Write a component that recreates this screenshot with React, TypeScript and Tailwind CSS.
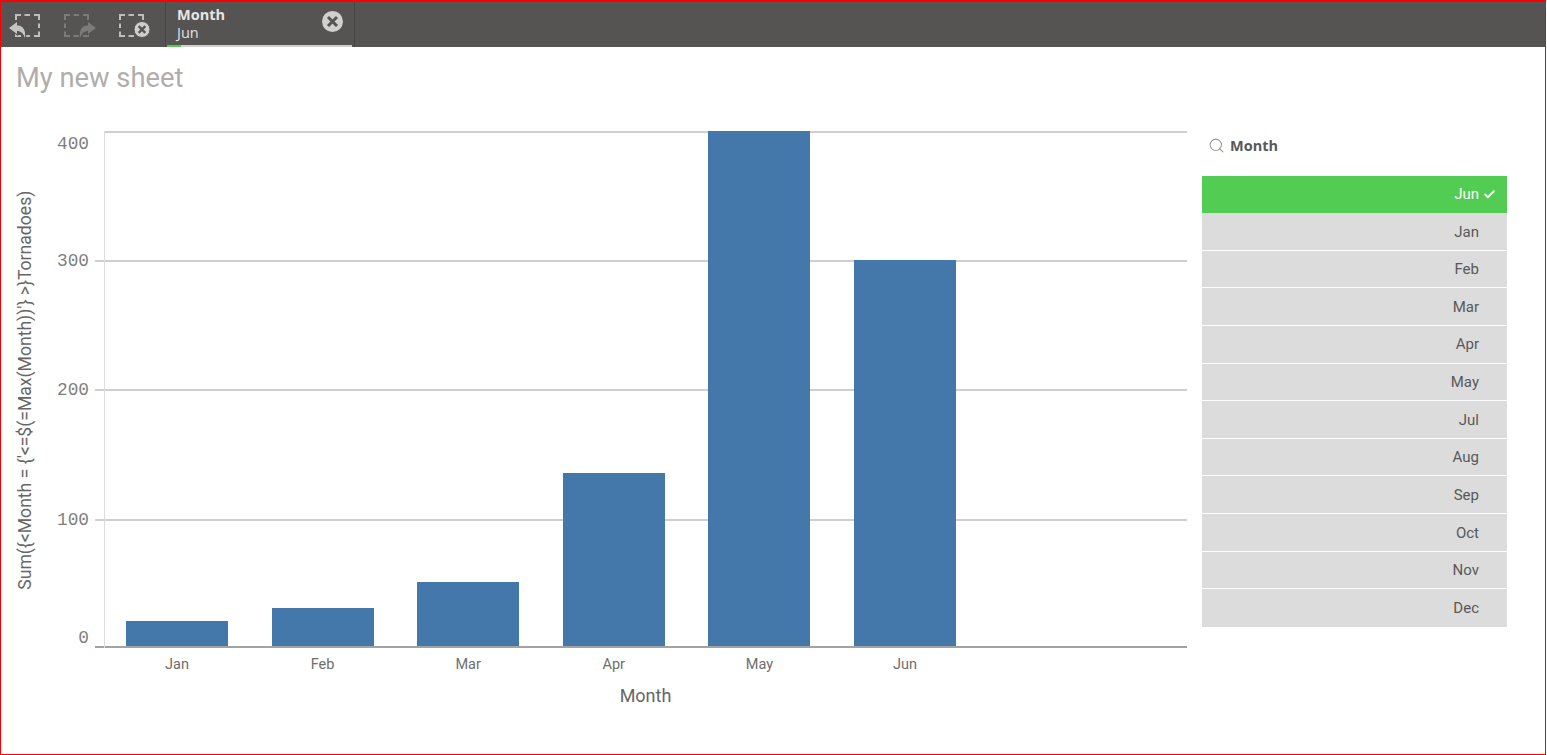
import { Check, Search } from 'lucide-react';

const months = ['Jan', 'Feb', 'Mar', 'Apr', 'May', 'Jul', 'Aug', 'Sep', 'Oct', 'Nov', 'Dec'];

const bars = [
  { month: 'Jan', value: 25 },
  { month: 'Feb', value: 38 },
  { month: 'Mar', value: 64 },
  { month: 'Apr', value: 173 },
  { month: 'May', value: 515 },
  { month: 'Jun', value: 386 },
];

const ticks = [
  { label: '400', rowClass: 'h-[129px]', labelClass: 'top-[3px]', lineClass: 'ml-[9px] bg-[#cfcfcf]' },
  { label: '300', rowClass: 'h-[129px]', labelClass: 'top-[-9px]', lineClass: 'bg-[#cfcfcf]' },
  { label: '200', rowClass: 'h-[130px]', labelClass: 'top-[-9px]', lineClass: 'bg-[#cfcfcf]' },
  { label: '100', rowClass: 'h-[127px]', labelClass: 'top-[-9px]', lineClass: 'bg-[#cfcfcf]' },
  { label: '0', rowClass: 'h-[2px]', labelClass: 'top-[-18px]', lineClass: 'bg-[#a3a3a3]' },
];

function DashedBox({ color }: { color: string }) {
  return (
    <path
      d="M1 6V1H6 M9.5 1H15 M19 1H24V6 M24 9.5V14 M24 17.5V22H19 M15 22H9.5 M6 22H1V17.5 M1 14V9.5"
      fill="none"
      stroke={color}
      strokeWidth="2"
    />
  );
}

function BackIcon() {
  return (
    <svg width="34" height="26" viewBox="-7 0 34 26">
      <DashedBox color="#bdbdbd" />
      <path d="M-6 14 L2 8 V11.5 C8 11 11 16 10 24 C8 19 6 17 2 17 V20 Z" fill="#c4c4c4" stroke="#565452" strokeWidth="2" paintOrder="stroke" />
    </svg>
  );
}

function ForwardIcon() {
  return (
    <svg width="34" height="26" viewBox="0 0 34 26">
      <DashedBox color="#7d7b79" />
      <path d="M32 14 L24 8 V11.5 C18 11 15 16 16 24 C18 19 20 17 24 17 V20 Z" fill="#7d7b79" stroke="#565452" strokeWidth="2" paintOrder="stroke" />
    </svg>
  );
}

function ClearAllIcon() {
  return (
    <svg width="34" height="26" viewBox="0 0 34 26">
      <DashedBox color="#bdbdbd" />
      <circle cx="23" cy="15.5" r="8" fill="#cfcfcf" stroke="#565452" strokeWidth="1" />
      <path d="M19.7 12.2 L26.3 18.8 M26.3 12.2 L19.7 18.8" stroke="#565452" strokeWidth="2.4" />
    </svg>
  );
}

function CloseIcon() {
  return (
    <svg width="21" height="21" viewBox="0 0 21 21">
      <circle cx="10.5" cy="10.5" r="10.5" fill="#d0d0d0" />
      <path d="M6 6 L15 15 M15 6 L6 15" stroke="#565452" strokeWidth="3" />
    </svg>
  );
}

function Toolbar() {
  return (
    <div className="flex h-[45px] shrink-0 bg-[#565452]">
      <div className="flex w-[164px] items-start pt-[12px]">
        <div className="ml-[7px] w-[56px]"><BackIcon /></div>
        <div className="w-[55px]"><ForwardIcon /></div>
        <div><ClearAllIcon /></div>
      </div>
      <div className="relative flex w-[190px] items-center justify-between border-x border-[#474543] pr-[11px] pl-[11px]">
        <div className="flex flex-col pb-[1px] font-['Open_Sans',sans-serif] leading-[18px]">
          <span className="text-[14.5px] font-bold text-[#e6e6e6]">Month</span>
          <span className="text-[14.5px] text-[#e0e0e0]">Jun</span>
        </div>
        <div className="pb-[6px]"><CloseIcon /></div>
        <div className="absolute right-[2px] bottom-0 left-[1px] flex h-[2px] bg-[#d0d0d0]">
          <div className="w-[14px] bg-[#52cc52]" />
        </div>
      </div>
    </div>
  );
}

function Chart() {
  return (
    <div className="flex w-[1186px] shrink-0 flex-col">
      <div className="flex h-[517px]">
        <div className="flex w-[37px] shrink-0 items-center justify-center pt-[2px] pl-[12px]">
          <span className="whitespace-nowrap text-[17.6px] text-[#666666] [transform:rotate(-90deg)]">
            {"Sum({<Month = {'<=$(=Max(Month))'} >}Tornadoes)"}
          </span>
        </div>
        <div className="relative flex-1 pl-[66px]">
          {/* tick labels and gridlines */}
          <div className="absolute inset-0 flex flex-col">
            {ticks.map((tick) => (
              <div key={tick.label} className={`relative pl-[57px] ${tick.rowClass}`}>
                <div className={`h-[2px] ${tick.lineClass}`} />
                <span className={`absolute right-[1098px] font-['Liberation_Mono',monospace] text-[17.8px] leading-[20px] text-[#7f7f7f] ${tick.labelClass}`}>
                  {tick.label}
                </span>
              </div>
            ))}
          </div>
          <div className="absolute top-0 bottom-0 left-[66px] w-px bg-[#dcdcdc]" />
          {/* bars */}
          <div className="relative flex h-[515px] items-end gap-[43.6px] pl-[22px]">
            {bars.map((bar) => (
              <div key={bar.month} className="w-[102px] bg-[#4477aa]" style={{ height: bar.value }} />
            ))}
          </div>
        </div>
      </div>
      <div className="ml-[125px] flex gap-[43.6px] pt-[8px] text-[14.5px] leading-[18px] text-[#6e6e6e]">
        {bars.map((bar) => (
          <span key={bar.month} className="w-[102px] text-center">{bar.month}</span>
        ))}
      </div>
      <div className="ml-[103px] pt-[12px] text-center text-[18px] leading-[20px] text-[#666666]">Month</div>
    </div>
  );
}

function MonthList() {
  return (
    <div className="ml-[15px] w-[305px] shrink-0">
      <div className="flex h-[45px] items-start gap-[5px] pt-[6px] pl-[6px]">
        <Search className="size-[17px] text-[#9a9a9a]" strokeWidth={1.5} />
        <span className="font-['Open_Sans',sans-serif] text-[14.5px] leading-[17px] font-bold text-[#595959]">Month</span>
      </div>
      <div className="flex h-[37px] items-center justify-end gap-[4px] bg-[#52cc52] pr-[11px] text-[15px] text-white">
        Jun <Check className="size-[13px]" strokeWidth={3.5} />
      </div>
      {months.map((month) => (
        <div
          key={month}
          className="flex h-[37.65px] items-center justify-end border-b border-white bg-[#dcdcdc] pt-[1px] pr-[28px] text-[15px] text-[#595959] last:border-b-0"
        >
          {month}
        </div>
      ))}
    </div>
  );
}

export default function App() {
  return (
    <div className="flex h-[755px] w-[1546px] flex-col overflow-hidden border-x border-t-2 border-b border-[#ff0000] bg-white font-['Roboto',sans-serif]">
      <Toolbar />
      <h1 className="h-[84px] shrink-0 pt-[13px] pl-[15px] text-[27.3px] leading-[36px] text-[#b0adab]">My new sheet</h1>
      <div className="flex">
        <Chart />
        <MonthList />
      </div>
    </div>
  );
}
